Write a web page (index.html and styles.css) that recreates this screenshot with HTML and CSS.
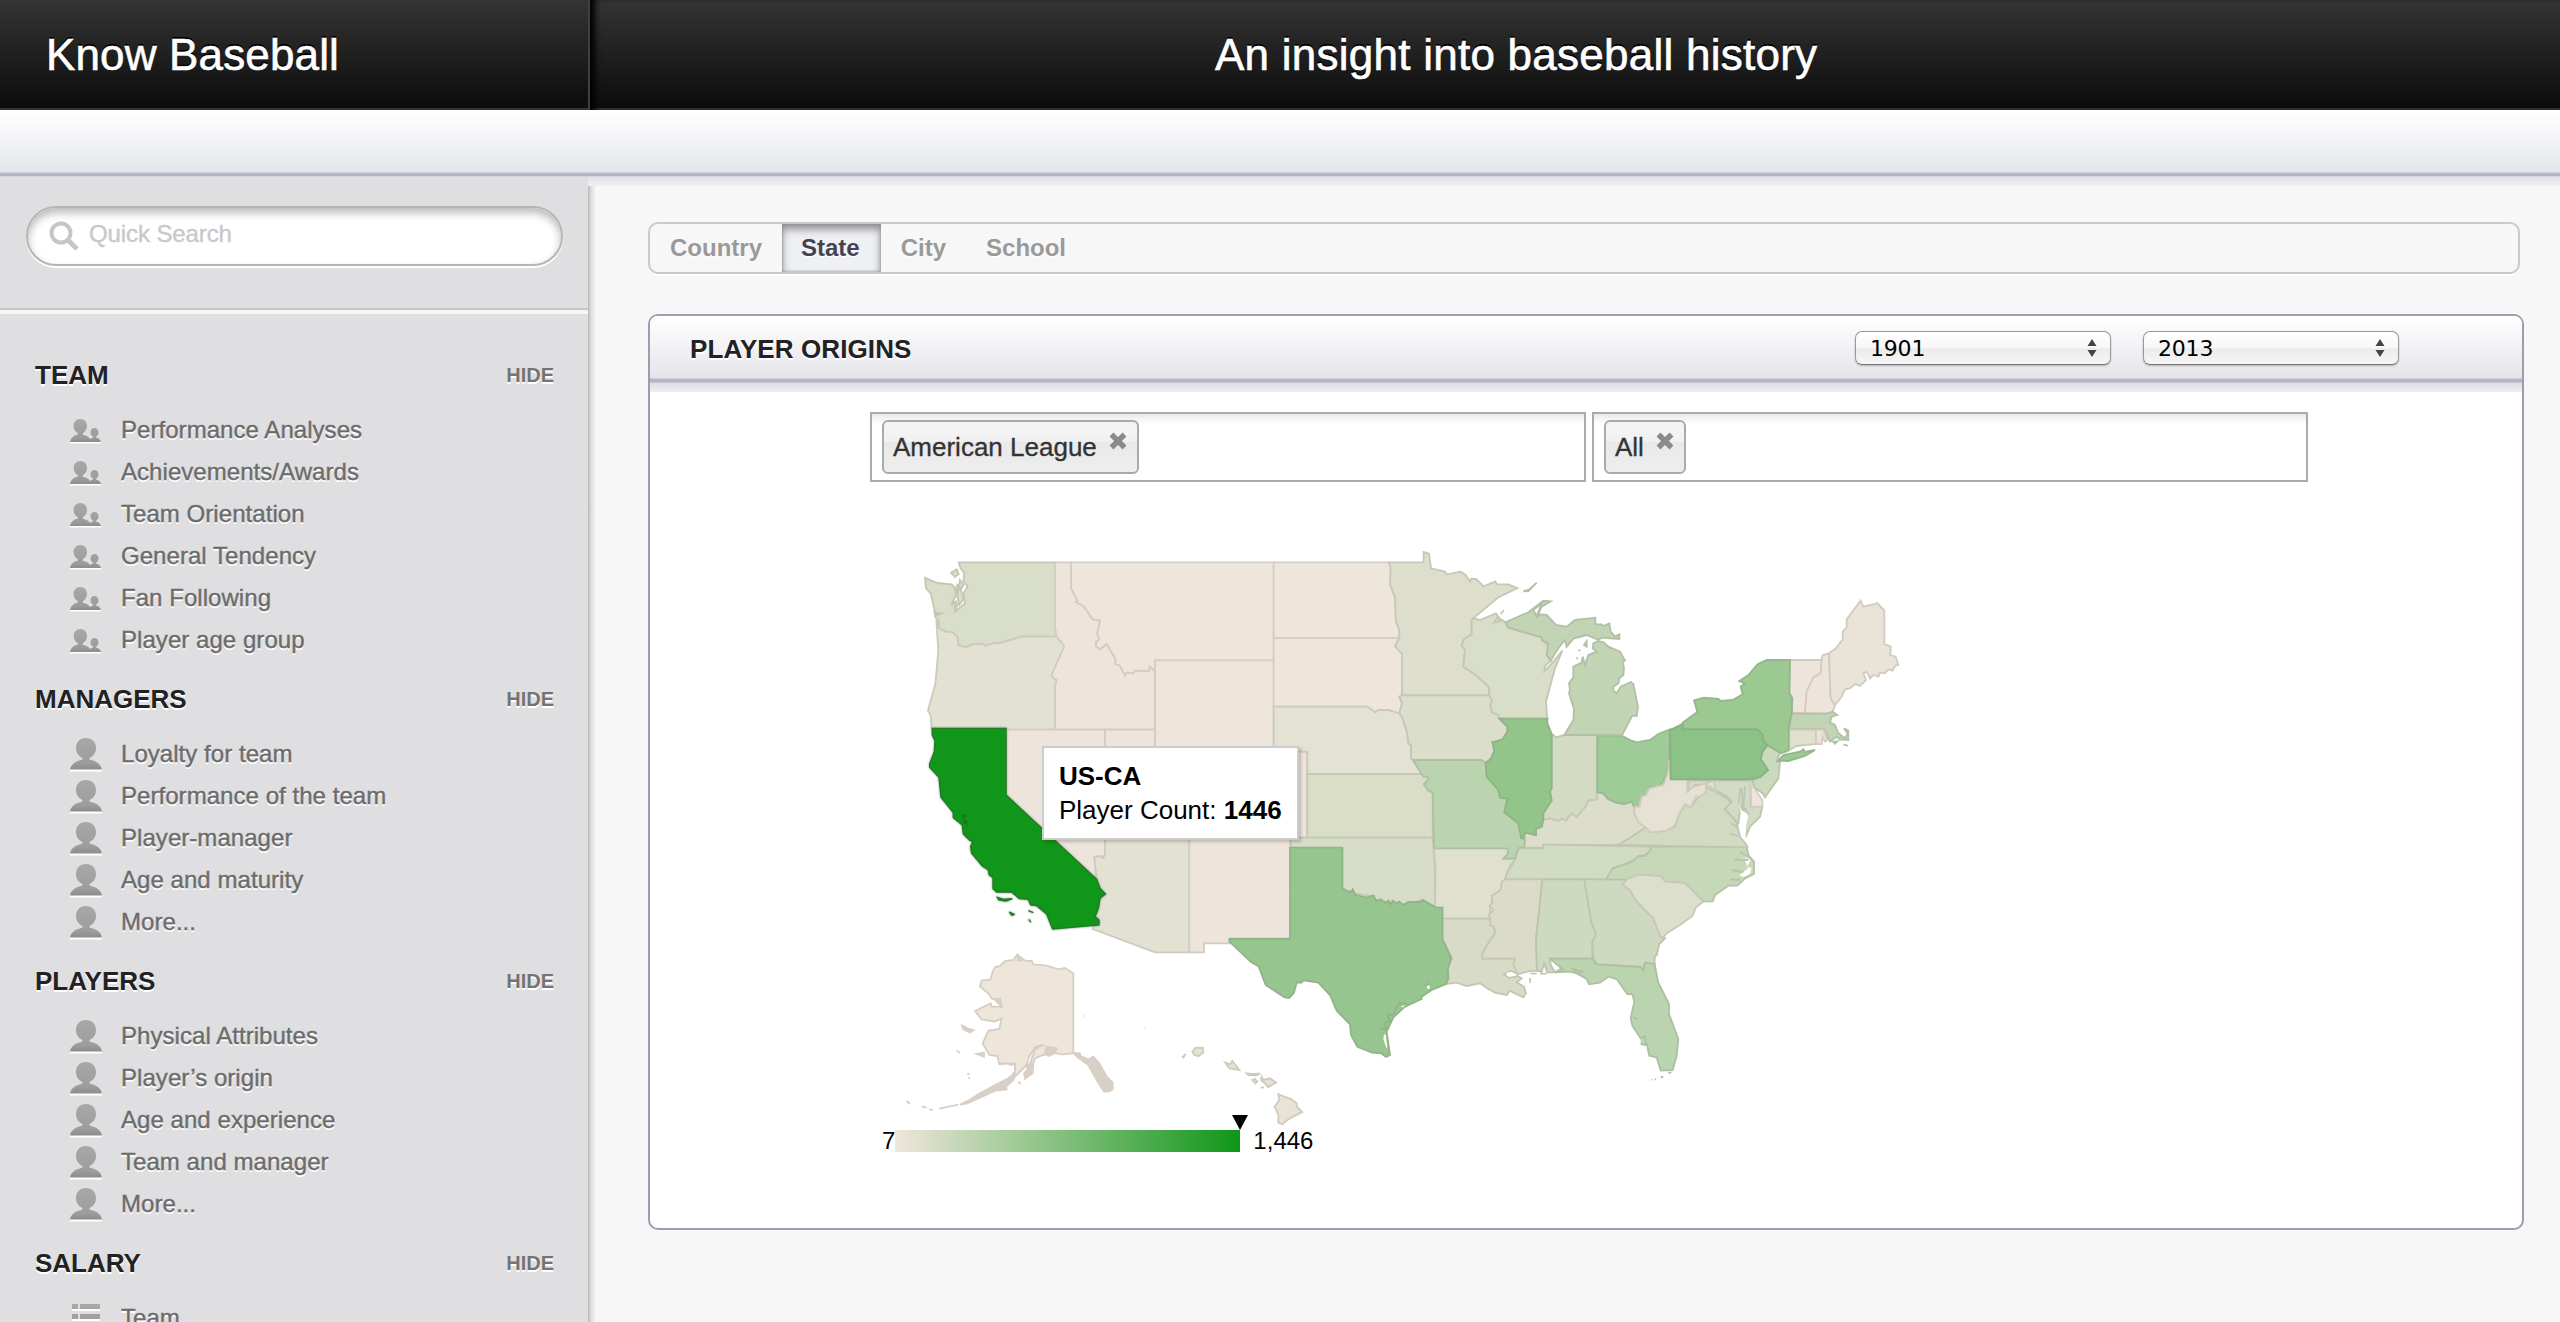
FILE: index.html
```html
<!DOCTYPE html>
<html lang="en">
<head>
<meta charset="utf-8">
<title>Know Baseball</title>
<link rel="stylesheet" href="styles.css">
</head>
<body>
<svg class="defs" width="0" height="0">
  <linearGradient id="ig" x1="0" y1="0" x2="0" y2="1"><stop offset="0" stop-color="#a8a8a8"/><stop offset=".8" stop-color="#9c9c9c"/><stop offset="1" stop-color="#8c8c8c"/></linearGradient>
  <symbol id="person" viewBox="0 0 32 34"><g fill="#fff"><path d="M0 33.500h32v-3H0z"/></g><path fill="url(#ig)" d="M16 0c6 0 10 4 10 10 0 5-3 8.500-6.500 10v1.500C26 23 31 26 32 31.500H0C1 26 6 23 12.500 21.500V20C9 18.500 6 15 6 10 6 4 10 0 16 0z"/></symbol>
  <symbol id="people" viewBox="0 0 32 25"><path fill="#fff" d="M0 24.500h31v-2H0z"/><path fill="url(#ig)" d="M10.300 0c4 0 6.700 3 6.700 7 0 3.500-2 6-4.200 7.200v1.500c3.500.6 6.200 2.300 7.200 4.300 1-.8 2.200-1.300 3.200-1.500v-.8c-1.700-.7-2.700-2.500-2.700-4.300 0-2.500 1.700-4.300 4-4.300s4 1.800 4 4.300c0 1.800-1 3.600-2.700 4.300v.8c2.700.5 4.700 2 5.200 4.500H0c.7-4 3.500-6.600 7.800-7.300v-1.500C5.600 13 3.600 10.500 3.600 7c0-4 2.700-7 6.700-7z"/></symbol>
  <symbol id="list" viewBox="0 0 32 34"><path fill="#fff" d="M2 7h28v2H2zM2 17h28v2H2zM2 27h28v2H2z"/><path fill="url(#ig)" d="M2 2h6v5H2zM10 2h20v5H10zM2 12h6v5H2zM10 12h20v5H10zM2 22h6v5H2zM10 22h20v5H10z"/></symbol>
</svg>

<header class="top">
  <h1 class="brand">Know Baseball</h1>
  <h2 class="tagline">An insight into baseball history</h2>
</header>
<div class="subbar"></div>

<div class="page">
  <aside class="sidebar">
    <div class="search-wrap">
      <div class="search">
        <svg class="glass" viewBox="0 0 31 30"><circle cx="13" cy="12" r="9.500" fill="none" stroke="#c6c6c6" stroke-width="4"/><path d="M20 19l9 9" stroke="#c6c6c6" stroke-width="5"/></svg>
        <span>Quick Search</span>
      </div>
    </div>
    <nav class="nav">
      <section>
        <div class="nav-head"><h3>TEAM</h3><a>HIDE</a></div>
        <ul class="pair">
          <li><svg><use href="#people"/></svg>Performance Analyses</li>
          <li><svg><use href="#people"/></svg>Achievements/Awards</li>
          <li><svg><use href="#people"/></svg>Team Orientation</li>
          <li><svg><use href="#people"/></svg>General Tendency</li>
          <li><svg><use href="#people"/></svg>Fan Following</li>
          <li><svg><use href="#people"/></svg>Player age group</li>
        </ul>
      </section>
      <section>
        <div class="nav-head"><h3>MANAGERS</h3><a>HIDE</a></div>
        <ul>
          <li><svg><use href="#person"/></svg>Loyalty for team</li>
          <li><svg><use href="#person"/></svg>Performance of the team</li>
          <li><svg><use href="#person"/></svg>Player-manager</li>
          <li><svg><use href="#person"/></svg>Age and maturity</li>
          <li><svg><use href="#person"/></svg>More...</li>
        </ul>
      </section>
      <section>
        <div class="nav-head"><h3>PLAYERS</h3><a>HIDE</a></div>
        <ul>
          <li><svg><use href="#person"/></svg>Physical Attributes</li>
          <li><svg><use href="#person"/></svg>Player’s origin</li>
          <li><svg><use href="#person"/></svg>Age and experience</li>
          <li><svg><use href="#person"/></svg>Team and manager</li>
          <li><svg><use href="#person"/></svg>More...</li>
        </ul>
      </section>
      <section>
        <div class="nav-head"><h3>SALARY</h3><a>HIDE</a></div>
        <ul>
          <li><svg><use href="#list"/></svg>Team</li>
        </ul>
      </section>
    </nav>
  </aside>

  <main class="main">
    <div class="tabs"><a>Country</a><a class="on">State</a><a>City</a><a>School</a></div>
    <section class="panel">
      <header class="panel-head">
        <h3>PLAYER ORIGINS</h3>
        <div class="select">1901<svg viewBox="0 0 10 18"><path d="M5 0l4.500 7h-9zM5 18l4.500-7h-9z"/></svg></div>
        <div class="select">2013<svg viewBox="0 0 10 18"><path d="M5 0l4.500 7h-9zM5 18l4.500-7h-9z"/></svg></div>
      </header>
      <div class="filters">
        <div class="box"><span class="chip">American League<svg viewBox="0 0 18 18"><path d="M2.500 2.500l13 13M15.500 2.500l-13 13"/></svg></span></div>
        <div class="box"><span class="chip">All<svg viewBox="0 0 18 18"><path d="M2.500 2.500l13 13M15.500 2.500l-13 13"/></svg></span></div>
      </div>
      <div class="map">
        <svg class="states" viewBox="-60 0 3240 1890">
          <!-- west -->
          <g>
            <path style="--c:#d9dec8" d="M176 97H465V292L470 320H365L295 341 285 338 256 347 248 342H222L198 352 175 345 172 320 155 306 135 305 117 295 115 270 106 262 102 232 92 190 78 175 75 143 112 159 155 163 165 172 168 195 155 222 168 215 165 245 195 220 190 190 203 170 190 155 193 130 182 115Z"/>
            <path style="--c:#d9dec8" d="M153 128L170 118 176 132 165 141ZM180 150L190 165 182 180 192 205 178 225 172 200ZM105 248L124 250 112 256ZM115 298L132 301 118 308ZM172 165L180 172 170 190ZM160 215L172 222 168 238Z"/>
            <path style="--c:#e3e2d2" d="M109 270L115 285 117 295 135 305 155 306 172 320 175 345 198 352 222 342H248L256 347 285 338 295 341 365 320H470L493 348 455 435 457 442 470 450 465 472V599H95L92 556 84 542 106 462 115 362Z"/>
            <path style="--c:#eee6db" d="M513 97H1121V391H765V425L750 410 746 424 705 422 700 430 680 428 675 437 660 408 646 402V386L620 343 600 358 588 350V336L598 328 591 310 600 272 578 268 550 229 528 216 532 212 513 175Z"/>
            <path style="--c:#ede4db" d="M465 97H513V175L532 212 528 216 550 229 578 268 600 272 591 310 598 328 588 336V350L600 358 620 343 646 386V402L660 408 675 437 680 428 700 430 705 422 746 424 750 410 765 425V599H465V472L470 450 457 442 455 435 493 348 470 320 465 292Z"/>
            <path style="--c:#eee6db" d="M765 391H1121V700H765Z"/>
            <path style="--c:#ede4db" d="M318 599H615V981L610 984 600 978 583 981 590 1048 318 795Z"/>
            <path style="--c:#ede4db" d="M615 599H765V665H868V930H615Z"/>
            <path style="--c:#ede4db" d="M868 665H1221V923H868Z"/>
            <path style="--c:#e3e2d2" d="M615 923H868V1267H765L578 1197 580 1187 597 1185 585 1160 598 1105 618 1092 600 1075 590 1048 583 981 600 978 610 984 615 972Z"/>
            <path style="--c:#ede4db" d="M868 923H1172V1225H990V1240H912V1267H868Z"/>
          </g>
          <!-- plains and midwest -->
          <g transform="translate(1080)">
            <path style="--c:#eee6db" d="M41 97H387L392 115 390 162 405 202 408 275 418 300V324H41Z"/>
            <path style="--c:#eee6db" d="M41 324H418L405 348 426 372V495L418 500 426 520 418 550 385 540H355L346 547 322 530H41Z"/>
            <path style="--c:#e4e2d3" d="M41 530H322L346 547 355 540H385L418 550 428 565 442 610 445 640 453 645V684L485 732H142V665H41Z"/>
            <path style="--c:#dddfcc" d="M387 97H491V66L507 71 513 115 555 125 560 133 602 125 617 135 630 155 633 146 648 147 671 169 706 154 711 163H745L772 174 715 202 640 265 635 270V313L612 327 605 347 615 360 610 410 650 437 686 470 688 496H426V372L405 348 418 324V300L408 275 405 202 390 162 392 115Z"/>
            <path style="--c:#d9dec8" d="M640 265L660 270 708 250 718 265 735 276 745 293 845 322 850 335 862 342 865 380 873 392 855 408 853 424 880 395 907 362 885 415 858 515 862 566H718L714 555 696 548 690 525 696 512 688 496 686 470 650 437 610 410 615 360 605 347 612 327 635 313V270Z"/>
            <path style="--c:#d9dec8" d="M702 278L712 262 724 272ZM722 252L732 240"/>
            <path style="--c:#dadeca" d="M426 496H688L696 512 690 525 696 548 714 555 718 566 742 590V605L728 628 697 637 703 662 692 687 677 698 664 690H460L453 684V645L445 640 442 610 428 565 418 550 426 520 418 500Z"/>
            <path style="--c:#dadec7" d="M142 732H485L490 740H503L505 748 492 762 505 782 518 787V923H142Z"/>
            <path style="--c:#d7ddc6" d="M92 923H518L525 1020V1131L487 1110 430 1125 390 1118 345 1110 343 1100 285 1090 247 1075V954H92Z"/>
            <path style="--c:#e0e0ce" d="M522 955H742L745 970 731 987H768L755 1000 745 1020 735 1052 722 1080 698 1110 690 1135 693 1166H548V1133L525 1131 527 1020Z"/>
            <path style="--c:#d3dbc2" d="M875 612L888 622 913 615H1012V808L985 812 978 828 950 862 935 850 918 872 905 866 895 873 870 865 850 870V850L875 812 870 785 875 775Z"/>
            <path style="--c:#dcdecb" d="M793 952L795 908 828 915V897L845 890 850 870 870 865 895 873 905 866 918 872 935 850 950 862 978 828 985 812 1012 808V787L1030 790 1045 808 1068 818 1093 822 1115 815 1122 830V850L1157 892 1105 932 1085 945H850V953Z"/>
            <path style="--c:#d2dcc3" d="M775 955H850V943L1172 950V960L1155 975 1140 978 1120 992 1060 1015 1040 1048H735L745 1020 765 990Z"/>
            <path style="--c:#bbd4b0" d="M460 690H664L677 698 680 740 715 780 720 803 742 806 733 847 775 880 784 925 795 927 793 950 775 955 765 985H731L745 970 742 955H522L518 787 505 782 492 762 505 748 503 740H490L485 732Z"/>
            <path style="--c:#9fcb98" d="M1012 617H1085L1110 630 1130 637 1170 630 1195 612 1230 598 1228 685 1220 730 1210 755 1195 770H1170L1165 795 1155 795 1140 828 1122 830 1115 815 1093 822 1068 818 1045 808 1030 790 1012 787Z"/>
            <path style="--c:#93c58b" d="M718 566H862V580L875 612V775L870 785 875 812 850 850V870L845 890 828 897V915L795 908 790 925H784L775 880 733 847 742 806 720 803 715 780 680 740 677 698 692 687 703 662 697 637 728 628 742 605V590Z"/>
          </g>
          <!-- south-east -->
          <g transform="translate(1500 810)">
            <path style="--c:#d8dcc6" d="M128 356H272L270 375 280 380 287 397 265 430 247 460V476H345L340 492 352 520 330 512 312 524 330 534 352 528 365 535 350 547 372 560 378 580 370 592 345 580 330 572 320 585 285 578 262 565 240 550 200 558 170 548 140 552 145 535V505L155 475 128 417Z"/>
            <path style="--c:#dadcc8" d="M315 238H427L408 420 411 512 380 515 352 524 340 492 345 476H247V460L265 430 287 397 280 380 270 375 272 356 266 345 280 330 268 318 278 308 275 288 302 270 305 245Z"/>
            <path style="--c:#cddac0" d="M427 238H553L574 367 588 402 577 428V476H450L452 495 465 517H442L432 490 425 515 411 512 408 420Z"/>
            <path style="--c:#cfd9c0" d="M553 238H680L668 255 690 270 708 302 760 355 782 410 795 415 778 432 770 465 764 470V492L735 488 730 512 722 501 590 493 580 476 577 428 588 402 574 367Z"/>
            <path style="--c:#c6d8b8" d="M752 140H1040L1045 165 1062 185V222L1035 235 1012 257H985L945 285 938 304 910 305 855 249 795 245 783 229 715 224 680 238H618L638 205 680 192 700 182 715 168 735 168 752 150Z"/>
            <path style="--c:#dddfcd" d="M680 238L715 224 783 229 795 245 855 249 910 305 888 322 877 348 840 375 800 400 790 412H782L760 355 708 302 690 270 668 255Z"/>
            <path class="water" d="M1012 177L1048 174 1030 165 1052 182 1040 200 1055 205 1050 222 1030 232 1018 225 1045 205 1035 182ZM318 523L325 516 335 524 326 530Z"/>
            <path style="--c:#c6d8b8" d="M1003 178L1045 180M995 210L1030 216M990 238L1020 240M1020 155L1046 172"/>
            <path style="--c:#bbd4b0" d="M450 476H577L590 493 722 501 730 512 735 488 764 492 775 548 807 612V642L835 717 830 768 818 810 782 812 770 772 748 767 740 730 722 715 697 677 692 655 703 605 697 582H682L650 537 625 530 600 548 567 553 560 537 530 520 510 515 465 517 485 505Z"/>
            <path style="--c:#bbd4b0" d="M480 500L490 512M520 508L530 520 550 515ZM700 650L712 658M722 715L735 708 738 735 722 732M805 820L814 816M782 833L790 830M764 838H768M754 839H757"/>
            <path style="--c:#dadcc8" d="M390 534V548M392 521H410M420 521H440"/>
          </g>
          <!-- north-east and great lakes -->
          <g transform="translate(1500 30)">
            <path style="--c:#d2dbc1" d="M655 915L690 893 738 862 750 877 800 872 825 860 838 822 855 792 872 802 900 765 918 740 950 757 980 775 995 790 975 808 1000 835 1010 850 1020 890 1042 918V922Z"/>
            <path style="--c:#d2dbc3" d="M865 722H1052V800H1087L1080 830 1050 860 1036 893 1040 830 1022 800 1015 850 975 808 995 785 985 772 945 750 930 722 918 735 885 735 865 755Z"/>
            <path class="water" d="M1016 790L1023 808 1045 825 1040 850 1036 898 1026 896 1030 850Z"/>
            <path style="--c:#d2dbc3" d="M1020 745L1016 790M1025 745L1028 810 1040 805M1035 740L1030 800 1048 825M992 850L1015 862M990 880L1012 888"/>
            <path style="--c:#e5e1d3" d="M808 658L812 718H862V755L880 740 918 730 940 722 948 755 930 738 918 735V755L900 770 888 770 872 802 855 792 838 822 822 860 800 872 750 877 738 862 718 850 703 822V800H718L725 770 738 765 748 745 790 735 803 700Z"/>
            <path style="--c:#eee4dc" d="M1052 722H1058L1070 755 1087 780V800H1054Z"/>
            <path style="--c:#ede4db" d="M1170 360H1265L1262 400 1240 412 1220 455 1215 519H1177L1175 470 1168 460Z"/>
            <path style="--c:#ede4db" d="M1265 360L1268 345 1287 340 1292 475 1305 495 1298 515 1280 521 1215 519 1220 455 1240 412 1262 400Z"/>
            <path style="--c:#eae3d8" d="M1287 340L1308 325 1328 298V275L1340 262V238L1382 182 1390 200 1432 190 1453 211V312L1472 320 1471 345 1487 350 1495 375 1485 378 1478 392 1465 388 1455 400 1440 398 1435 410 1420 405 1410 415 1400 395 1390 400 1398 420 1380 438 1365 432 1350 445 1335 448 1325 470 1305 495 1292 475Z"/>
            <path style="--c:#c1d5b4" d="M1175 521H1280L1298 515 1312 525 1295 530 1290 548 1305 555 1315 580 1335 595 1343 580 1332 565 1345 572V600L1320 598 1310 590 1290 605 1272 567H1168ZM1300 606L1312 604 1305 611ZM1330 614L1344 617Z"/>
            <path style="--c:#e0e0cf" d="M1168 569H1248V612L1190 618 1160 635 1168 620Z"/>
            <path style="--c:#ebe3d8" d="M1248 569H1270L1282 600 1275 605 1268 590 1265 612H1248Z"/>
            <path style="--c:#cbdabc" d="M1102 615L1140 638 1130 665H1140L1135 715 1095 772 1088 760 1062 742 1058 722 1080 712 1104 690 1082 657 1087 637Z"/>
            <path style="--c:#9cc892" d="M1100 360H1170L1168 460 1177 475 1175 520 1166 560V630L1143 640 1102 615 1090 603 1087 583 1072 568H848V548L892 516 882 481 912 473 955 477 962 483 998 480 1028 463 1022 440 1035 430 1018 423 1045 405 1073 373ZM1135 662L1150 645 1200 635 1210 628 1215 636 1245 630 1215 648 1165 663Z"/>
            <path style="--c:#8cc187" d="M810 570L848 552V568H1072L1087 583 1090 603 1102 615 1087 637 1082 657 1104 690 1082 710 1055 718H812Z"/>
            <path style="--c:#c1d4b4" d="M580 310L595 303 612 308 625 320 660 335 675 362 668 365 672 385 670 405 658 415 655 430 640 440V452L650 460 662 440 693 426 700 432 714 500 710 528 697 527 666 585H493L520 540 522 508 507 460 510 448 507 430 520 412V380L545 368 548 350 555 375 565 345 590 335 578 325Z"/>
            <path style="--c:#c1d4b4" d="M318 246L385 217 430 182 452 184 425 200 410 233 420 223 440 225 468 255 500 260 525 240 586 233V253H605L612 258 628 250 632 275 645 290 658 283V297L605 293 595 300 560 285 520 296 500 320 495 300 480 318 475 325 452 362 440 345 445 310 425 300 425 292 325 263ZM370 154L388 148 410 128 385 153ZM400 210L410 228 425 190ZM552 315L560 304V320ZM535 330L541 332M529 353L533 356"/>
          </g>
          <!-- texas -->
          <g transform="translate(780 750)">
            <path style="--c:#96c58f" d="M390 203H547V325L562 335 574 335 578 328 586 345 620 352 640 347 648 362 662 358 676 368 686 362 690 374 698 362 710 370 718 365 730 375 745 366H782L788 360 828 383H847V478L874 534 863 565 865 595 858 612 815 630 785 650V657L735 680 700 712 680 755 690 825 678 831 663 820 636 818 592 800 573 765 570 733 530 692 510 645 475 608 430 601 425 608H410L402 638 388 654 374 652 317 615 296 559 272 545 208 484V477H390Z"/>
            <path style="--c:#96c58f" d="M660 745L680 750 672 730 690 722 682 705 700 704 710 680 720 668 740 672M795 620L810 608"/>
            <path class="water" d="M672 765L670 778 680 805 682 800 677 762ZM798 620L808 615 810 624 805 628ZM722 680L735 674 730 682Z"/>
          </g>
          <!-- california -->
          <path class="hot" d="M97 595H318V795L590 1048 600 1075 616 1092 600 1105 595 1135 585 1160 597 1170V1185L458 1197 440 1152 410 1127 392 1125 385 1108 358 1106 335 1086H290L279 1076V1042L268 1035 265 1020 247 1008 215 970 212 950 218 935 208 930 190 912 187 885 160 863V848L123 802 117 742 89 712V702L103 665 105 632 97 615ZM292 1102L310 1108 337 1106 318 1113 296 1110ZM328 1146L342 1153 336 1156ZM385 1142L400 1148M386 1168L393 1177"/>
          <path class="bay" d="M183 850L203 857 192 868 203 872V884L210 892 190 880 188 866Z"/>
          <!-- alaska and hawaii -->
          <g transform="translate(-60 1200)">
            <path style="--c:#eee6db" d="M305 152L332 148 338 125 345 112 360 108 375 93 400 90 412 74 435 92 455 93 460 103 500 107 535 118 555 114 580 130V370L545 373 520 368 490 375 465 385 462 395 450 400 465 360 485 345 465 352 445 385 440 405 405 440 380 465 375 460 405 425 405 400 395 405 380 400 358 403 352 378 328 375 308 340 325 302 358 297 365 265 345 275 305 268 285 243 332 220 335 230H362L360 210 335 205 325 190 300 170Z"/>
            <path class="coast" d="M580 368L600 370 602 378 625 388 640 380 658 400 680 440 698 458V478L688 484 672 485 650 450 625 405 590 380ZM500 350L530 355 525 370 505 378 495 368ZM440 405L460 398 458 430 435 446 432 430 442 420ZM405 432L400 450 378 470 380 478 345 482 300 503 262 520 240 524 265 512 300 490 345 465 385 445ZM246 287L262 295 280 300 270 308 250 297ZM290 372L312 368V380ZM345 210L360 205 366 230ZM230 362L240 368M262 433L268 430M265 444H270M80 513L90 522M125 530L140 533M148 538L158 540M178 536L235 524M415 455L422 462M412 78L430 90 415 93ZM480 346L495 346M355 400L400 400"/>
            <path style="--c:#e5e2d3" d="M937 365L945 354 968 353 970 368 955 379 942 374ZM1036 398L1050 403 1057 393 1078 420 1048 415ZM906 383L918 372M908 384L914 378M1100 430L1115 432 1140 431 1130 436 1105 435ZM1117 450L1125 447 1132 455 1126 460ZM1145 440L1150 450 1170 445 1188 458 1165 471 1155 460 1143 450ZM1142 473L1152 472M611 258H613M794 295H796"/>
            <path style="--c:#e9e3d6" d="M1195 492L1205 497 1235 508 1250 520V530L1267 546 1235 562 1215 575 1208 583 1195 578V555L1184 530 1198 510Z"/>
          </g>
        </svg>
        <div class="tooltip"><b>US-CA</b><span>Player Count: <b>1446</b></span></div>
        <div class="legend"><span>7</span><i class="bar"></i><span class="max">1,446</span></div>
      </div>
    </section>
  </main>
</div>
</body>
</html>
```
FILE: styles.css
```css
* { box-sizing: border-box; }
body {
  margin: 0; height: 1322px; overflow: hidden;
  display: flex; flex-direction: column;
  font-family: "Liberation Sans", Arial, sans-serif;
  background: #f7f7f7; color: #222;
}
h1, h2, h3, ul { margin: 0; padding: 0; font-weight: normal; list-style: none; }
.defs { position: absolute; }

.top {
  flex: none; height: 110px; display: flex; color: #fff;
  background: linear-gradient(#343434, #0c0c0c 98%, #333 98%);
  text-shadow: 0 -2px 0 #000;
}
.brand, .tagline { font-size: 44px; line-height: 110px; white-space: nowrap; -webkit-text-stroke: .6px #fff; }
.brand { width: 590px; padding-left: 46px; border-right: 2px solid #3f3f3f; letter-spacing: .15px; }
.tagline { flex: 1; padding-left: 625px; letter-spacing: .25px; box-shadow: inset 8px 0 6px -3px #000; }

.subbar {
  flex: none; height: 67px;
  background: linear-gradient(#fff, #f1f2f4 50%, #e3e5ea 62px, #d3d6de 62px, #b1b6c6 64px, #b1b6c6 66px, #d2d5dc 66px);
}
.page { flex: 1; min-height: 0; display: flex; }

.sidebar { flex: none; width: 588px; background: #dfdfe1; }
.search-wrap { height: 137px; padding: 29px 25px 0 26px; border-bottom: 4px solid #f6f6f6; background: linear-gradient(#c6c6c6, #c6c6c6) 0 100%/100% 2px no-repeat; }
.search {
  height: 60px; display: flex; align-items: flex-start; gap: 10px; padding: 13px 0 0 20px;
  border: 2px solid #b5b5b5; border-radius: 30px; background: #fff;
  box-shadow: inset 0 5px 9px #bbb, 0 2px 0 #fff;
  font-size: 24px; line-height: 27px; color: #c9c9c9; letter-spacing: -.1px;
  -webkit-text-stroke: .4px #c9c9c9;
}
.glass { width: 31px; height: 30px; }
.search span { margin-top: -1px; }
.nav { padding: 44px 34px 0 35px; text-shadow: 0 2px 0 #fff; }
.nav section { margin-bottom: 21px; }
.nav-head { display: flex; justify-content: space-between; line-height: 32px; height: 32px; margin-bottom: 19px; }
.nav-head h3 { font-size: 26px; font-weight: bold; color: #222; line-height: 34px; }
.nav-head a { font-size: 20px; font-weight: bold; color: #747474; line-height: 34px; }
.nav li { display: flex; gap: 19px; height: 42px; padding-left: 35px; line-height: 42px; font-size: 24px; color: #6c6c6c; white-space: nowrap; letter-spacing: .05px; -webkit-text-stroke: .4px #6c6c6c; }
.nav li svg { flex: none; width: 32px; height: 34px; margin-top: 5px; }
.nav .pair li svg { height: 25px; margin-top: 10px; }

.main {
  flex: 1; padding: 45px 36px 0 60px;
  background:
    linear-gradient(#dfe1e7, #f0f0f3) 0 0/100% 9px no-repeat,
    linear-gradient(90deg, #b9b9bb, #dedede 40%, #f7f7f7) 0 0/8px 100% no-repeat;
}
.tabs {
  height: 52px; display: flex; margin-right: 4px;
  border: 2px solid #c9c9c9; border-radius: 10px; box-shadow: 0 2px 0 #fff;
  font-size: 24px; font-weight: bold; line-height: 48px; color: #999;
}
.tabs a { padding: 0 20px; text-shadow: 0 1px 0 #fff; }
.tabs .on { padding: 0 21px 0 19px; color: #434350; background: #eff0f3; box-shadow: inset 0 5px 8px #8c8c8c, inset 0 0 3px #888; }

.panel {
  height: 916px; margin-top: 40px;
  border: 2px solid #9a9eb0; border-radius: 10px; background: #fff; overflow: hidden;
}
.panel-head {
  height: 76px; display: flex; align-items: flex-start; padding: 15px 123px 0 40px;
  background: linear-gradient(#fff, #f2f2f5 32px, #e4e4ea 62px, #d4d5df 62px, #b2b3c4 64px, #b2b3c4 66px, #dcdde3 67px, #efeff2 76px);
}
.panel-head h3 { flex: 1; font-size: 26px; font-weight: bold; line-height: 36px; text-shadow: 0 2px 0 #fff; letter-spacing: .1px; }
.select {
  width: 256px; height: 34px; margin-left: 32px; padding: 0 13px 0 14px;
  display: flex; justify-content: space-between; align-items: center;
  border: 1.500px solid #999; border-bottom-color: #777; border-radius: 7px;
  background: linear-gradient(#fff, #f7f7f7 50%, #ebebeb 50%, #f6f6f6);
  box-shadow: 0 1px 2px rgba(0,0,0,.25);
  font: 22px "DejaVu Sans", sans-serif; letter-spacing: -.2px; color: #000;
}
.select svg { width: 10px; height: 18px; fill: #444; }

.filters { display: flex; gap: 6px; margin: 20px 0 0 220px; }
.box { width: 716px; height: 70px; padding: 6px 10px; border: 2px solid #aaa; background: linear-gradient(#eaeaea, #fff 10px); }
.chip {
  display: inline-flex; gap: 12px; height: 54px; padding: 0 10px 0 9px;
  border: 2px solid #aaa; border-radius: 6px;
  background: linear-gradient(#f4f4f4 20%, #f0f0f0 40%, #e9e9e9 41%, #eee);
  font-size: 26px; line-height: 50px; color: #333; -webkit-text-stroke: .3px #333;
}
.chip svg { width: 18px; height: 18px; margin-top: 10px; stroke: #8a8a8a; stroke-width: 5.500; }

.map { position: relative; width: 1080px; height: 630px; margin: 48px 0 0 230px; }
.states { display: block; width: 1080px; height: 630px; }
.states path { fill: var(--c); stroke: color-mix(in srgb, var(--c) 76%, #858078); stroke-width: 5.500; }
.states .water { fill: #fff; stroke: none; }
.states .hot { fill: #109618; stroke: #1d7d22; stroke-width: 4; filter: drop-shadow(0 0 3px #888); }
.states .bay { fill: #14801b; stroke: none; }
.states .coast { fill: #d8cfc6; stroke: #d8cfc6; }
.tooltip {
  position: absolute; left: 162px; top: 216px; width: 257px; height: 94px; padding: 11px 15px;
  display: flex; flex-direction: column;
  border: 2px solid #ccc; background: #fff; box-shadow: 2px 2px 3px rgba(0,0,0,.2);
  font-size: 26px; line-height: 34px; color: #000; white-space: nowrap;
}
.legend { position: absolute; left: 2px; top: 600px; display: flex; font-size: 24px; line-height: 22px; color: #000; }
.bar { position: relative; width: 345px; height: 22px; background: linear-gradient(90deg, #efe6dc, #109618); }
.bar::after { content: ""; position: absolute; right: -8px; top: -15px; border: 8px solid transparent; border-top: 15px solid #000; border-bottom: 0; }
.max { margin-left: 13px; }
```
